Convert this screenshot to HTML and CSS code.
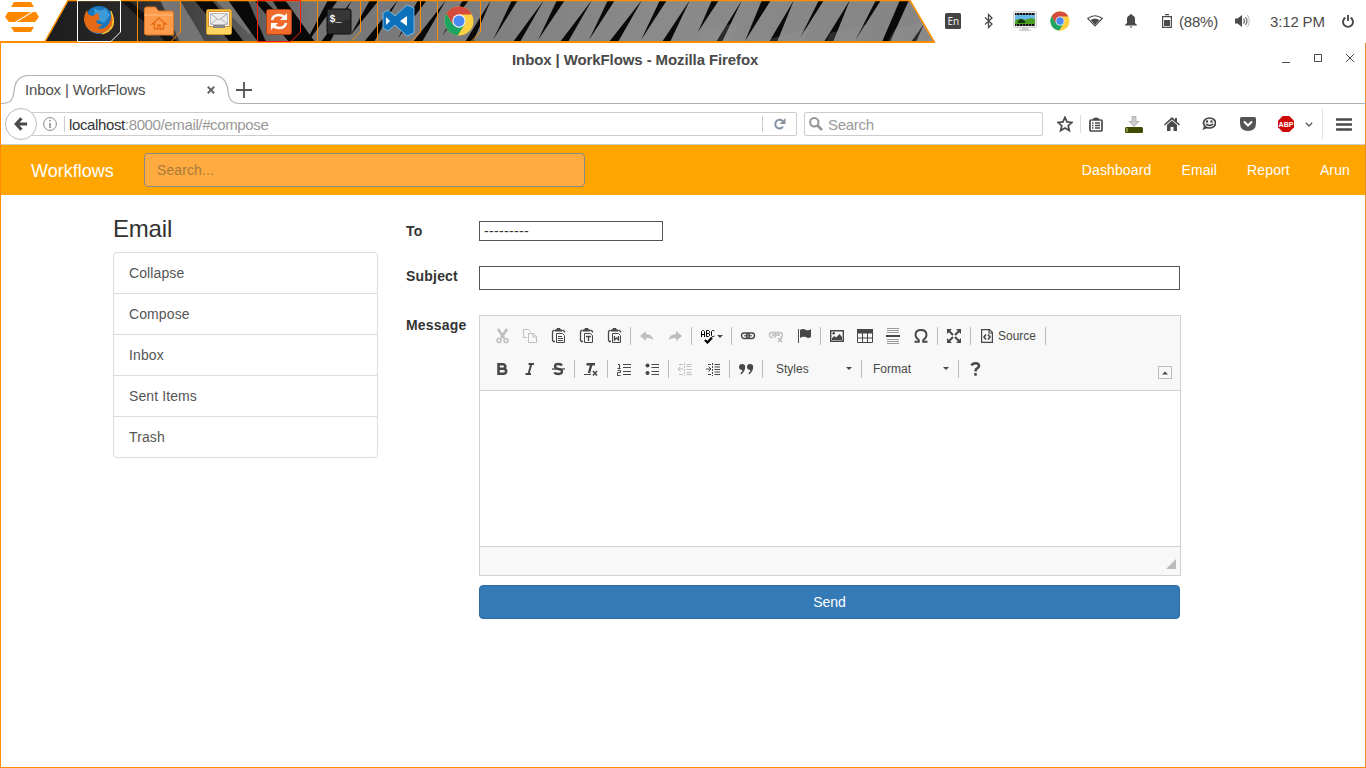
FILE: index.html
```html
<!DOCTYPE html>
<html lang="en">
<head>
<meta charset="utf-8">
<title>Inbox | WorkFlows</title>
<link rel="stylesheet" href="styles.css">
</head>
<body>
<svg class="defs" width="0" height="0">
  <symbol id="chrome" viewBox="0 0 30 30">
    <circle cx="15" cy="15" r="14.5" fill="#fbd140"/>
    <path d="M2.4 7.8A14.5 14.5 0 0 1 27.8 8.4L15 8.4 8.8 18.6z" fill="#d54b3d"/>
    <path d="M2.4 7.8A14.5 14.5 0 0 0 13.6 29.4L21 18 8.8 18.3z" fill="#1da462"/>
    <circle cx="15" cy="15" r="6.7" fill="#f1f1f1"/><circle cx="15" cy="15" r="5.5" fill="#4a8af4"/>
  </symbol>
  <symbol id="clip" viewBox="0 0 16 16">
    <path d="M3.500 2.500h-1l-1 1v9l1 1H4M11.500 2.500h1l1 1v1" fill="none" stroke="#474747" stroke-width="1.300"/>
    <path d="M4 3V2h2V.5h3V2h2v1z" fill="#474747"/>
    <path d="M5.500 5.500h6l2 2v7h-8z" fill="#f8f8f8" stroke="#474747"/>
  </symbol>
</svg>

<header class="panel">
  <svg class="wall" width="936" height="43" viewBox="0 0 936 43">
    <defs>
      <linearGradient id="wg" x1="0" x2="936" y1="0" y2="0" gradientUnits="userSpaceOnUse">
        <stop offset=".05" stop-color="#1c1c1c"/><stop offset=".15" stop-color="#2c2c2c"/><stop offset=".25" stop-color="#555"/><stop offset=".33" stop-color="#747474"/><stop offset=".7" stop-color="#8a8a8a"/><stop offset="1" stop-color="#858585"/>
      </linearGradient>
      <clipPath id="wc"><path d="M45 42L68 1H910L934 42z"/></clipPath>
    </defs>
    <g clip-path="url(#wc)">
      <path d="M40 0h896v43H40z" fill="url(#wg)"/>
      <path d="M160 0h20l25 42h-25zM215 0h35v35z" fill="#747474"/>
      <path d="M194 0h18l32 42h-14zM228 0h20l18 42h-8zM254 0h10l43 42h-18zM285 0l30 42h-16L272 0z" fill="#090909"/>
      <path d="M128 0l50 42h-12L120 0z" fill="#111"/>
      <g fill="#090909">
        <path d="M328 0h10l-30 42h-2zM352 0l-22 42h-9zM370 0h9l-29 36zM398 0l-24 42h-10zM418 0h9l-29 38zM446 0l-24 42h-9zM463 0h6l-27 36zM491 0l-18 42h-8z"/>
        <path d="M512 0h6l-25 40zM544 0l-24 42h-7zM557 0h8l-27 40zM592 0l-24 42h-8zM608 0h7l-26 40zM642 0l-24 42h-9zM660 0h7l-26 40zM690 0l-20 42h-8zM712 0h7l-21 32zM742 0l-20 42h-6zM762 0h9l-26 41zM794 0l-17 42h-8zM819 0h5l-24 38zM850 0l-17 42h-9zM876 0h5l-26 41zM900 0h9l-19 42h-8zM924 24l-8 18h-5z"/>
      </g>
      <path d="M700 31l40-9-10 20h-30zM760 41l50-12-8 14h-42zM830 33l39-9-12 18h-31zM895 29l38-10v22h-45z" fill="#999" opacity=".25"/>
    </g>
    <path d="M45 41.500L68 .5H910L934 41.500" fill="none" stroke="#ff8f00" stroke-width="1.500"/>
    <path d="M0 42H935" stroke="#ff8f00" stroke-width="2"/>
  </svg>
  <svg class="zorin" width="36" height="34" viewBox="0 0 36 34" fill="#ff8800"><path d="M10 2h17l3 5H7zM4 12H27L11 22H5L1 17zM35 17l-4 5H13L29 12h3zM7 27h23l-3 5H10z"/></svg>
  <div class="tasks">
    <div class="task"><svg width="45" height="43" viewBox="0 0 45 43"><path d="M.5 .5H43.500V32L34 41.500H.5z" class="frame white"/>
      <circle cx="22" cy="20" r="14" fill="#1976bd"/><path d="M17 8q7 5 11 0l5 7-6 8-9-4z" fill="#3c9bd6"/><path d="M10 10Q7 14 7 21a15 15 0 0 0 29 2q1-6-2-11 1 9-4 14-4 4-9 2l5-4q-6 1-7-3l4-2q-3-4 0-6-4 0-7 3-3 0-5-2z" fill="#e66a16"/><path d="M34 11q7 17-9 23 17-4 9-23z" fill="#ffd33c" stroke="#ffc02e"/></svg></div>
    <div class="task"><svg width="45" height="43" viewBox="0 0 45 43"><path d="M.5 .5H43.500V32L34 41.500H.5z" class="frame"/>
      <path d="M7.500 34V9q0-2 2-2h9l3 4h13q2 0 2 2v22h-27z" fill="#fb9b4b" stroke="#d9731f"/><path d="M7 15h29" stroke="#ffc080"/><path d="M15 24l7-6 7 6h-2.500v5H23v-4h-2v4h-3.500v-5z" fill="none" stroke="#e56b11" stroke-width="1.300"/></svg></div>
    <div class="task"><svg width="45" height="43" viewBox="0 0 45 43">
      <rect x="9.500" y="9.500" width="25" height="25" rx="2" fill="#f0c04a" stroke="#d49b24"/><path d="M11.500 11.500h21v15h-21z" fill="#fff" stroke="#dc8f2b"/><path d="M13.500 13.500h17v11h-17z" fill="#ececec" stroke="#bbb"/><path d="M14 14l8 6 8-6M14 24l6-5M30 24l-6-5" fill="none" stroke="#aaa"/><path d="M16 25h12v3H16z" fill="#888"/><path d="M10 27h6v1h12v-1h6v7H10z" fill="#ffd463"/></svg></div>
    <div class="task"><svg width="45" height="43" viewBox="0 0 45 43"><path d="M.5 .5H43.500V32L34 41.500H.5z" class="frame red"/>
      <rect x="9.500" y="9.500" width="25" height="25" rx="2" fill="#ef6a2c" stroke="#ad3f11"/><path d="M15 20q1-5 7-5 4 0 6 3M29 23q-1 5-7 5-4 0-6-3" fill="none" stroke="#fff" stroke-width="2.500"/><path d="M30 13v7h-7zM14 30v-7h7z" fill="#fff"/></svg></div>
    <div class="task"><svg width="45" height="43" viewBox="0 0 45 43"><path d="M.5 .5H43.500V32L34 41.500H.5z" class="frame"/>
      <rect x="10" y="9" width="24" height="25" rx="2" fill="#2b2b2b" stroke="#111"/><path d="M11 10h22v9l-22 6z" fill="#444" opacity=".5"/><text x="12.500" y="22" class="prompt">$_</text></svg></div>
    <div class="task"><svg width="45" height="43" viewBox="0 0 45 43"><path d="M.5 .5H43.500V32L34 41.500H.5z" class="frame"/>
      <path d="M30 5l7 3v25l-7 3-12-11-7 6-5-3V13l5-3 7 6z" fill="#0b72bb" stroke="#8dc6ec" stroke-width=".8"/><path d="M9 17v8l4-4zM30 16v10l-7-5z" fill="#fff"/></svg></div>
    <div class="task"><svg width="45" height="43" viewBox="0 0 45 43"><path d="M.5 .5H43.500V32L34 41.500H.5z" class="frame"/><use href="#chrome" x="7" y="6" width="30" height="30"/></svg></div>
  </div>
  <div class="tray">
    <svg width="16" height="16" viewBox="0 0 16 16"><rect width="16" height="16" rx="1.500" fill="#444"/><text x="2.500" y="12" class="lang">En</text></svg>
    <svg class="t-bt" width="10" height="16" viewBox="0 0 10 16" fill="none" stroke="#4a4a4a" stroke-width="1.300"><path d="M1 4.500l7 6.500-3.500 3.500v-13L8 5 1 11.500"/></svg>
    <svg class="t-mon" width="24" height="21" viewBox="0 0 24 21"><rect x=".5" y=".5" width="23" height="16" rx="1" fill="#eee" stroke="#ccc"/><path d="M2 2h20v13H2z" fill="#111"/><path d="M2 4h20v9H2z" fill="#65b7ec"/><path d="M2 10q4-4 10-1 5-3 10-1v5H2z" fill="#4a9e20"/><path d="M5 10q3-4 7 0v2H5z" fill="#123b12"/><path d="M3 3h19M3 14h19" stroke="#bbb" stroke-dasharray="1 2"/><path d="M9 17h6v1.500h3V20H6v-1.500h3z" fill="#ccc"/></svg>
    <svg class="t-ch" width="20" height="20"><use href="#chrome" width="20" height="20"/></svg>
    <svg class="t-wifi" width="16" height="12" viewBox="0 0 16 12"><path d="M.7 3.500Q8-2 15.300 3.500L8 11z" fill="none" stroke="#4a4a4a" stroke-width="1.100"/><path d="M3.600 5Q8 2 12.400 5L8 10z" fill="#4a4a4a"/></svg>
    <svg class="t-bell" width="12" height="14" viewBox="0 0 12 14" fill="#4a4a4a"><path d="M6 0q1 0 1 1 3 1 3 4v4l2 2v.5H0V11l2-2V5q0-3 3-4 0-1 1-1zM4.500 12.500h3L6 14z"/></svg>
    <svg class="t-bat" width="10" height="14" viewBox="0 0 10 14"><path d="M.6 2.600h8.800v10.800H.6zM3 .6h4" fill="none" stroke="#4a4a4a" stroke-width="1.200"/><path d="M2 6h6v6H2z" fill="#4a4a4a"/></svg>
    <span class="bat-text">(88%)</span>
    <svg class="t-vol" width="15" height="14" viewBox="0 0 15 14"><path d="M0 4.500h2.500L7 1v12L2.500 9.500H0z" fill="#4a4a4a"/><path d="M8.500 4.500q2 2.500 0 5M10.500 3q3 4 0 8" fill="none" stroke="#666" stroke-width="1.200"/><path d="M12.500 1q3.500 6 0 12" fill="none" stroke="#bbb"/></svg>
    <span class="clock">3:12 PM</span>
    <svg class="t-pow" width="12" height="13" viewBox="0 0 12 13" fill="none" stroke="#4a4a4a" stroke-width="1.900"><path d="M3.400 2.600a5 5 0 1 0 5.200 0M6 0v6"/></svg>
  </div>
</header>

<div class="window">
  <div class="titlebar">
    <div class="title">Inbox | WorkFlows - Mozilla Firefox</div>
    <svg class="winctl" width="74" height="14" viewBox="0 0 74 14" fill="none" stroke="#4a4a4a"><path d="M1 11.500h8M33.500 3.500h7v7h-7zM65 3l8 8M73 3l-8 8"/></svg>
  </div>
  <div class="tabbar">
    <svg class="tabshape" width="1365" height="30" viewBox="0 0 1365 30"><path d="M0 28.500C10 28.500 12 25 13 16 14 6 18 .5 28 .5H212C222 .5 226 6 227 16c1 9 4 12.500 12 12.500H1365" fill="#fff" stroke="#aeb0b4" stroke-width="1.200"/></svg>
    <span class="tabname">Inbox | WorkFlows</span>
    <svg class="tabx" width="8" height="8" viewBox="0 0 8 8"><path d="M.8.800l6.400 6.400M7.200.800L.8 7.200" stroke="#666" stroke-width="2"/></svg>
    <svg class="plus" width="16" height="16" viewBox="0 0 16 16"><path d="M8 0v16M0 8h16" stroke="#555" stroke-width="1.800"/></svg>
  </div>
  <div class="navbar">
    <div class="back"><svg width="14" height="14" viewBox="0 0 16 16" fill="none" stroke="#4b4b4b" stroke-width="3.500"><path d="M8.500 1.500L2.500 8l6 6.500M3 8h12"/></svg></div>
    <div class="url">
      <svg width="14" height="14" viewBox="0 0 14 14" fill="none" stroke="#888"><circle cx="7" cy="7" r="6.400"/><path d="M7 6v5M7 3v1.600" stroke-width="1.500"/></svg>
      <i class="usep"></i>
      <span class="addr"><b>localhost</b>:8000/email/#compose</span>
      <i class="usep right"></i>
      <svg class="reload" width="12" height="12" viewBox="0 0 12 12"><path d="M9 8.700A4.300 4.300 0 1 1 8.500 3" fill="none" stroke="#8593a0" stroke-width="2"/><path d="M11.500 0v6h-6z" fill="#8593a0"/></svg>
    </div>
    <div class="searchbox"><svg width="14" height="14" viewBox="0 0 14 14" fill="none" stroke="#949494"><circle cx="5.300" cy="5.300" r="4.200" stroke-width="2"/><path d="M8.500 8.500l4.500 4.500" stroke-width="2.600"/></svg><span>Search</span></div>
    <div class="tools">
      <svg width="16" height="16" viewBox="0 0 16 16"><path d="M8 1.300l2 4.600 5 .5-3.800 3.300 1.200 4.900L8 12l-4.400 2.600 1.200-4.900L1 6.400l5-.5z" fill="none" stroke="#4a4a4a" stroke-width="1.700"/></svg>
      <i class="bsep"></i>
      <svg class="b-list" width="14" height="15" viewBox="0 0 14 15"><rect x="1" y="3" width="12" height="11" rx="1" fill="none" stroke="#4a4a4a" stroke-width="1.700"/><path d="M4 3V1.500Q7-.5 10 1.500V3z" fill="#4a4a4a"/><path d="M3 6h1.500M6 6h5M3 8.500h1.500M6 8.500h5M3 11h1.500M6 11h5" stroke="#4a4a4a" stroke-width="1.300"/></svg>
      <svg class="b-down" width="18" height="17" viewBox="0 0 18 17"><path d="M7 .5h4v5h3L9 10.500 4 5.500h3z" fill="#c8cccc" stroke="#aaa" stroke-width=".8"/><rect y="11" width="18" height="6" rx="1.500" fill="#404a00"/><path d="M1 12h2v4H1z" fill="#7b9342"/></svg>
      <svg class="b-home" width="16" height="14" viewBox="0 0 16 14" fill="#4a4a4a"><path d="M8 0l8 7.500-1 1L8 2.500l-7 6-1-1zM13 1v4l-2-2V1zM3 8l5-4.500L13 8v6H9.500v-4h-3v4H3z"/></svg>
      <svg class="b-chat" width="14" height="14" viewBox="0 0 14 14"><ellipse cx="7.500" cy="6" rx="6" ry="5" fill="#eee" stroke="#444" stroke-width="1.700"/><path d="M2 9l-1.500 4 5-2z" fill="#444"/><path d="M5 3.500v2M9.500 3.500v2" stroke="#333" stroke-width="2"/><path d="M4 7q3.500 3 7 0" fill="none" stroke="#333" stroke-width="1.300"/></svg>
      <svg class="b-pocket" width="16" height="14" viewBox="0 0 16 14"><path d="M1.500 0h13Q16 0 16 1.500V6q0 8-8 8T0 6V1.500Q0 0 1.500 0z" fill="#555"/><path d="M4 4.500l4 4 4-4" fill="none" stroke="#fff" stroke-width="2"/></svg>
      <svg class="b-abp" width="16" height="16" viewBox="0 0 16 16"><path d="M4.700 0h6.600L16 4.700v6.600L11.300 16H4.700L0 11.300V4.700z" fill="#cc0a0a"/><text x="8" y="10.500" text-anchor="middle" class="abp">ABP</text></svg>
      <svg class="b-chev" width="8" height="5" viewBox="0 0 8 5"><path d="M.8.800L4 4 7.200.800" fill="none" stroke="#555" stroke-width="1.300"/></svg>
      <i class="tsep"></i>
      <svg class="b-menu" width="16" height="13" viewBox="0 0 16 13"><path d="M1 1.500h14M1 6.500h14M1 11.500h14" stroke="#4a4a4a" stroke-width="2.600" stroke-linecap="round"/></svg>
    </div>
  </div>

  <nav class="sitebar">
    <a class="brand">Workflows</a>
    <div class="sitesearch">Search...</div>
    <div class="links"><a>Dashboard</a><a>Email</a><a>Report</a><a>Arun</a></div>
  </nav>

  <main class="page">
    <aside class="side">
      <h3>Email</h3>
      <ul><li>Collapse</li><li>Compose</li><li>Inbox</li><li>Sent Items</li><li>Trash</li></ul>
    </aside>
    <section class="form">
      <div class="row to"><label>To</label><div class="select">---------</div></div>
      <div class="row subject"><label>Subject</label><div class="input"></div></div>
      <div class="row message"><label>Message</label>
        <div class="stack">
        <div class="editor">
          <div class="top">
            <div class="bar">
              <span class="btn off"><svg viewBox="0 0 16 16"><path d="M4 1l6 9M13 1L7 10" stroke-width="2.500"/><circle cx="5" cy="12.500" r="2" fill="none" stroke-width="1.500"/><circle cx="12" cy="12.500" r="2" fill="none" stroke-width="1.500"/></svg></span>
              <span class="btn off"><svg viewBox="0 0 16 16" fill="none"><path d="M5 9.500H1.500v-8h5L9 4M6.500 5.500h5l3 3v6h-8zM11 5.500V9h3.500"/></svg></span>
              <span class="btn nudge"><svg viewBox="0 0 16 16"><use href="#clip"/><path d="M7 8.500h4M7 10.500h5M7 12.500h5"/></svg></span>
              <span class="btn nudge"><svg viewBox="0 0 16 16"><use href="#clip"/><path d="M7 8.500h5M9.500 8v5" stroke-width="1.300"/></svg></span>
              <span class="btn nudge"><svg viewBox="0 0 16 16"><use href="#clip"/><path d="M7.500 8v4l2-2 2 2V8" fill="none" stroke-width="1.300"/></svg></span>
              <i></i>
              <span class="btn off"><svg viewBox="0 0 16 16"><path d="M1 8l6-5v3q6 0 7.500 6Q11 9.500 7 10v3z" class="solid"/></svg></span>
              <span class="btn off"><svg viewBox="0 0 16 16"><path d="M15 8L9 3v3q-6 0-7.500 6Q5 9.500 9 10v3z" class="solid"/></svg></span>
              <i></i>
              <span class="btn spell"><svg width="24" viewBox="0 0 24 16"><path d="M1.500 9V3.500l1-1h1l1 1V9M1.500 6.500h3M6.500 2.500v6h2l1-1V6l-1-.5H6.500h2l1-1v-1l-1-1zM14.500 3l-1-.5h-1l-1 1v4l1 1h1l1-.5" fill="none" stroke="#000"/><path d="M5 12l2.500 2.500L12 9.500" fill="none" stroke="#000" stroke-width="2.200"/><path d="M17 7h6l-3 3z" class="solid"/></svg></span>
              <i></i>
              <span class="btn"><svg viewBox="0 0 16 16" fill="none"><rect x="1.500" y="5" width="8" height="5.500" rx="2.700" stroke-width="1.400"/><rect x="6.500" y="5" width="8" height="5.500" rx="2.700" stroke-width="1.400"/><path d="M4 7.800h8"/></svg></span>
              <span class="btn off"><svg viewBox="0 0 16 16" fill="none"><path d="M5 9.500H4Q1.500 9.500 1.500 7T4 4.500h4q2 0 2 2M8 9.500Q6 9 6.500 7 7 4.500 9 4.500h3q2.500 0 2.500 2.500T12 9M4 7h8" stroke-width="1.300"/><path d="M10 10l4 4M14 10l-4 4" stroke-width="1.500"/></svg></span>
              <span class="btn"><svg viewBox="0 0 16 16"><path d="M2.500 1v14"/><path d="M4 2q3-2 6 0 3 1 5-1v8q-3 2-5 0-3-1-6 1z" class="solid"/></svg></span>
              <i></i>
              <span class="btn"><svg viewBox="0 0 16 16"><path d="M1.700 2.700h12.600v10.600H1.700z" fill="none" stroke-width="1.400"/><path d="M3 12V10l2.500-2L7 9.500 10.500 6 13 9v3z" class="solid"/><circle cx="4.700" cy="5.300" r="1.300" class="solid"/></svg></span>
              <span class="btn"><svg viewBox="0 0 16 16" fill="none"><path d="M.5 2v12.500h15V2M.5 10h15M5.500 5v9M10.500 5v9"/><path d="M0 1h16v4.500H0z" class="solid"/></svg></span>
              <span class="btn"><svg viewBox="0 0 16 16"><path d="M2 .5h12M2 2.500h12M2 4.500h12M2 11.500h12M2 13.500h12M2 15.500h12" stroke="#999"/><path d="M1 8h14" stroke-width="2"/></svg></span>
              <span class="btn"><svg viewBox="0 0 16 16" fill="none"><path d="M1.500 13.800H5.800V12Q2.500 10 2.500 6.800 2.500 2 8 2t5.500 4.800q0 3.200-3.300 5.200v1.800h4.300" stroke-width="1.900"/></svg></span>
              <i></i>
              <span class="btn"><svg viewBox="0 0 16 16"><path d="M3 3l4 4M13 3L9 7M3 13l4-4M13 13L9 9" stroke-width="2"/><path d="M1 1h5L1 6zM15 1v5l-5-5zM1 15v-5l5 5zM15 15h-5l5-5z" class="solid"/></svg></span>
              <i></i>
              <span class="btn source"><svg viewBox="0 0 16 16" fill="none"><path d="M2.600 1.600h8l2.800 2.800v10H2.600zM10 1.500V5h3" stroke-width="1.200"/><path d="M7 6.500L5 9l2 2.500M9 6.500L11 9l-2 2.500" stroke-width="1.600"/></svg><em>Source</em></span>
              <i></i>
            </div>
            <div class="bar">
              <span class="btn"><svg viewBox="0 0 16 16" fill="none"><path d="M4.500 3.200h4q2.800 0 2.800 2.300T8.500 7.800H5 9q3.200 0 3.200 2.500T9 12.800H4.500z" stroke-width="2.500"/></svg></span>
              <span class="btn"><svg viewBox="0 0 16 16" fill="none"><path d="M6.500 3H12M3.500 13H9M9.300 3L6.500 13" stroke-width="2"/></svg></span>
              <span class="btn"><svg viewBox="0 0 16 16" fill="none"><path d="M12 4.500Q11 3 8.500 3 5 3 5 5.300T8.500 8t3.500 2.600Q12 13 8.500 13 5.500 13 4.300 11.500" stroke-width="2.300"/><path d="M2 8h13" stroke-width="1.300"/></svg></span>
              <i></i>
              <span class="btn"><svg viewBox="0 0 16 16" fill="none"><path d="M3.500 3.200H12M8.500 3L6 12" stroke-width="2.400"/><path d="M1 13.500h7"/><path d="M10 10l4 4.500M14 10l-4 4.500" stroke-width="1.500"/></svg></span>
              <i></i>
              <span class="btn"><svg viewBox="0 0 16 16" fill="none"><path d="M2 3.500h1.500V7M1.500 7.500h3M1.500 9.500h3v2h-3v3h3M7 3.500h8M7 6.500h8M7 10.500h8M7 13.500h8"/></svg></span>
              <span class="btn"><svg viewBox="0 0 16 16"><circle cx="3.500" cy="4.500" r="2" class="solid"/><circle cx="3.500" cy="12" r="2" class="solid"/><path d="M7.500 3.500H15M7.500 6.500H15M7.500 10.500H15M7.500 13.500H15"/></svg></span>
              <i></i>
              <span class="btn off"><svg viewBox="0 0 16 16"><path d="M1 8h5M3.500 5.500L1 8l2.500 2.500M2 3.500h4M2 13.500h4M9.500 3.500H15M9.500 5.500H14M9.500 8.500H15M9.500 11.500H14M9.500 13.500H15" fill="none"/><path d="M7.500 2v13" stroke-dasharray="2 1"/></svg></span>
              <span class="btn"><svg viewBox="0 0 16 16"><path d="M1 8h5M3.500 5.500L6 8l-2.500 2.500M3 3.500h3M3 13.500h3M9.500 3.500H15M9.500 6H15M9.500 8.500H15M9.500 11H15M9.500 13.500H15" fill="none"/><path d="M7.500 2v13" stroke-dasharray="2 1"/></svg></span>
              <i></i>
              <span class="btn"><svg viewBox="0 0 16 16"><path d="M1 6a3.100 3.100 0 1 1 6.200 0Q7 11 3 13.500L2.500 12Q4.500 10.500 4.500 9 1 9 1 6zM9 6a3.100 3.100 0 1 1 6.200 0Q15 11 11 13.500L10.500 12Q12.500 10.500 12.500 9 9 9 9 6z" class="solid"/></svg></span>
              <i></i>
              <span class="combo styles"><em>Styles</em><u></u></span>
              <i></i>
              <span class="combo format"><em>Format</em><u></u></span>
              <i></i>
              <span class="btn"><svg viewBox="0 0 16 16" fill="none"><path d="M4.500 4.500Q5.500 2.200 8.500 2.200q3.500 0 3.500 2.600Q12 6.500 10 7.500 8.500 8.200 8.500 10.500M8.500 12v2.800" stroke-width="2.500"/></svg></span>
              <span class="collapse"><svg width="12" height="12" viewBox="0 0 12 12"><path d="M3 7.500h6l-3-3z" fill="#474747"/></svg></span>
            </div>
          </div>
          <div class="area"></div>
          <div class="foot"><svg width="10" height="10" viewBox="0 0 10 10"><path d="M10 0v10H0z" fill="#bcbcbc"/></svg></div>
        </div>
        <div class="send">Send</div>
        </div>
      </div>
    </section>
  </main>
</div>
</body>
</html>
```
FILE: styles.css
```css
* { box-sizing: border-box; }
body { margin: 0; width: 1366px; height: 768px; overflow: hidden; background: #fff; font-family: "Liberation Sans", Arial, sans-serif; font-size: 14px; color: #333; }
svg { display: block; flex: none; }
.defs { position: absolute; }
.panel { position: relative; height: 43px; display: flex; }
.wall { position: absolute; left: 0; top: 0; }
.zorin { position: relative; margin: 0 0 0 4px; }
.tasks { position: relative; display: flex; margin-left: 37px; }
.task { width: 60px; }
.frame { fill: none; stroke: #ff8c00; stroke-width: 1; }
.frame.white { stroke: #fff; }
.frame.red { stroke: #ff1e0a; }
.prompt { font: bold 10px "Liberation Mono", monospace; fill: #fff; }
.lang { font: 10px "Noto Sans", sans-serif; fill: #eee; }
.tray { display: flex; align-items: center; margin-left: 448px; height: 42px; font-size: 15px; color: #4a4a4a; }
.t-bt { margin-left: 23px; }
.t-mon { margin-left: 19px; }
.t-ch { margin-left: 13px; }
.t-wifi { margin-left: 17px; }
.t-bell { margin-left: 22px; }
.t-bat { margin-left: 25px; }
.bat-text { margin-left: 7px; width: 39px; white-space: nowrap; letter-spacing: -.2px; }
.t-vol { margin-left: 17px; }
.clock { margin-left: 20px; width: 55px; white-space: nowrap; letter-spacing: -.15px; }
.t-pow { margin-left: 17px; }

.window { height: 725px; border-left: 1px solid #ff8c00; border-right: 1px solid #e88e28; border-bottom: 1px solid #ff8c00; }
.titlebar { height: 32px; display: flex; align-items: center; }
.title { margin-left: 511px; width: 246px; font-weight: bold; font-size: 15px; color: #4a4a4a; white-space: nowrap; letter-spacing: -.1px; }
.winctl { margin-left: 523px; margin-top: -2px; }
.tabbar { position: relative; height: 30px; display: flex; align-items: center; }
.tabshape { position: absolute; left: 0; top: 0; }
.tabname { position: relative; margin-left: 24px; width: 182px; font-size: 15px; color: #505050; letter-spacing: -.15px; padding-bottom: 2px; }
.tabx, .plus { position: relative; }
.plus { margin-left: 21px; }
.navbar { height: 40px; display: flex; align-items: center; border-bottom: 1px solid #ccc; padding-bottom: 1px; }
.back { position: relative; z-index: 1; width: 32px; height: 32px; margin-left: 4px; border: 1px solid #bbb; border-radius: 50%; background: #fff; display: flex; align-items: center; justify-content: center; }
.url { width: 766px; height: 24px; margin-left: -6px; border: 1px solid #ccc; border-radius: 2px; display: flex; align-items: center; padding-left: 11px; }
.usep { width: 1px; height: 16px; background: #ccc; margin: 0 4px 0 7px; }
.usep.right { margin: 0 11px 0 auto; }
.addr { font-size: 15px; color: #999; white-space: nowrap; letter-spacing: -.37px; }
.addr b { font-weight: normal; color: #333; }
.reload { margin-right: 10px; }
.searchbox { width: 239px; height: 24px; margin-left: 7px; border: 1px solid #ccc; border-radius: 2px; display: flex; align-items: center; padding-left: 4px; gap: 5px; font-size: 15px; color: #999; letter-spacing: -.3px; }
.tools { display: flex; align-items: center; margin-left: 14px; }
.bsep { width: 1px; height: 18px; background: #ddd; margin-left: 7px; }
.b-list { margin-left: 8px; }
.b-down { margin-left: 22px; }
.b-home { margin-left: 21px; }
.b-chat { margin-left: 22px; }
.b-pocket { margin-left: 24px; }
.b-abp { margin-left: 22px; }
.b-chev { margin-left: 11px; }
.tsep { width: 1px; height: 32px; background: #e2e2e2; margin: 0 13px 0 9px; }
.abp { font: bold 7px "Liberation Sans", sans-serif; fill: #fff; }

.sitebar { height: 50px; background: #ffa500; display: flex; align-items: center; color: #fff; }
.brand { margin-left: 30px; width: 113px; font-size: 18px; padding-top: 2px; }
.sitesearch { width: 441px; height: 34px; border: 1px solid #888; border-radius: 4px; background: #ffab40; color: #a97b3d; padding: 0 12px; line-height: 32px; letter-spacing: .1px; }
.links { margin-left: auto; display: flex; gap: 30px; padding-right: 15px; letter-spacing: .13px; }
.page { display: flex; padding-left: 112px; }
.side { width: 265px; padding-top: 20px; }
.side h3 { margin: 0; font-size: 24px; font-weight: normal; line-height: 27px; padding-bottom: 10px; letter-spacing: -.2px; }
.side ul { margin: 0; padding: 0; list-style: none; border: 1px solid #ddd; border-radius: 4px; color: #555; letter-spacing: .1px; }
.side li { height: 41px; line-height: 40px; padding-left: 15px; border-bottom: 1px solid #ddd; }
.side li:last-child { border-bottom: 0; height: 40px; }
.form { margin-left: 28px; padding-top: 26px; }
.row { display: flex; align-items: flex-start; }
.row label { width: 73px; font-weight: bold; line-height: 20px; letter-spacing: .2px; }
.to { height: 45px; }
.select { width: 184px; height: 20px; border: 1px solid #555; padding-left: 4px; line-height: 18px; letter-spacing: .34px; }
.subject { height: 49px; }
.input { width: 701px; height: 24px; border: 1px solid #555; }
.editor { width: 702px; height: 261px; border: 1px solid #d1d1d1; display: flex; flex-direction: column; }
.top { height: 75px; background: #f8f8f8; border-bottom: 1px solid #d1d1d1; padding: 3px 8px; }
.bar { height: 33px; display: flex; align-items: center; font-size: 12px; color: #474747; }
.bar i { width: 1px; height: 18px; background: #bcbcbc; margin: 0 2px; }
.bar em { font-style: normal; padding-top: 1px; }
.btn { width: 28px; display: flex; justify-content: center; }
.btn svg { width: 16px; height: 16px; stroke: #474747; }
.btn .solid { fill: #474747; stroke: none; }
.btn.nudge { padding-left: 2px; }
.off { opacity: .32; }
.btn.spell { width: 35px; }
.btn.spell svg { width: 24px; }
.btn.source { width: 70px; justify-content: flex-start; padding-left: 6px; gap: 3px; align-items: center; }
.combo { display: flex; align-items: center; justify-content: space-between; padding: 0 7px 0 11px; }
.combo.styles { width: 94px; }
.combo.format { width: 92px; padding-left: 9px; }
.combo u { border: 3px solid transparent; border-top-color: #474747; border-bottom: 0; }
.collapse { width: 14px; height: 13px; border: 1px solid #bcbcbc; margin: 8px 0 0 auto; display: flex; align-items: center; justify-content: center; }
.area { flex: 1; }
.foot { height: 29px; background: #f8f8f8; border-top: 1px solid #d1d1d1; display: flex; justify-content: flex-end; align-items: flex-end; padding: 0 4px 6px; }
.send { width: 701px; height: 34px; margin-top: 9px; background: #337ab7; border: 1px solid #2e6da4; border-radius: 4px; color: #fff; text-align: center; line-height: 32px; }
```
